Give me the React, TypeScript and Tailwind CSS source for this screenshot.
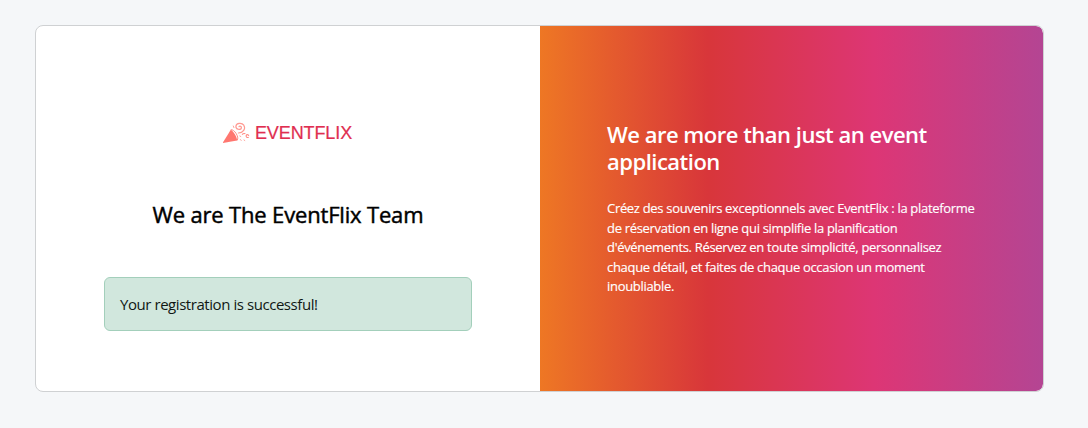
function Logo() {
  return (
    <div className="mr-[2px] flex h-6 items-center gap-[5px]">
      <svg width="28" height="24" viewBox="0 0 28 24" fill="none" aria-hidden="true">
        <path d="M.6 21.9 8.8 8.8C11.4 10.5 14.5 15 15.2 19.4Z" fill="#ff7770" />
        <path d="M8.8 8.8C12 7.8 17.6 16 15.2 19.4" stroke="#ff8a83" strokeWidth="1" />
        <path d="M16.4 12C21.2 11.8 24 7.7 21.8 4.2c-2-2.9-7.5-2.3-7.9 1-.3 3.2 4.8 4.3 5.5 1.8.4-1.5-1.5-2.4-2.4-1.4" stroke="#ff9a92" strokeWidth="1.2" strokeLinecap="round" />
        <path d="M20 13.6c1.2-1.2 2.2-1.4 3.4-.8M26.7 16.2c-1.4.6-3-.1-2.5-1.7.6-1.5 2.8-.9 2.4.5" stroke="#ff8a83" strokeWidth="1.1" />
        <path d="m11.3 5 .6 1.6M17.8 15l1 .5M18.4 18.5l.8 1M22 19l.8.5" stroke="#ffa49c" strokeWidth="1" strokeLinecap="round" />
      </svg>
      <span className="font-['Liberation_Sans',sans-serif] text-[18px] leading-6 tracking-[-0.1px] text-[#e02e50] [-webkit-text-stroke:0.2px_#e02e50]">EVENTFLIX</span>
    </div>
  );
}

export default function App() {
  return (
    <main className="h-[428px] bg-[#f5f7f9] pt-[25px] pl-[35px] font-['Open_Sans','Noto_Sans',sans-serif]">
      <div className="flex h-[367px] w-[1009px] overflow-hidden rounded-lg border border-[#cfd1d3] bg-white">
        <section className="flex w-[504px] flex-col items-center px-[68px] pt-[95px]">
          <Logo />
          <h1 className="mt-[56px] text-[22px] leading-[27px] tracking-[-0.17px] whitespace-nowrap text-black [-webkit-text-stroke:0.45px_black]">We are The EventFlix Team</h1>
          <div role="alert" className="mt-[49px] h-[54px] w-full rounded-md border border-[#a3cfbb] bg-[#d1e7dd] px-[15px] text-[15px] leading-[53px] tracking-[-0.44px] text-[#101814]">
            Your registration is successful!
          </div>
        </section>
        <section className="w-[503px] rounded-r-[7px] bg-[linear-gradient(to_right,#ee7724,#d8363a,#dd3675,#b44593)] pt-[95px] pl-[67px] text-white">
          <h2 className="w-[369px] text-[22px] leading-[27px] font-semibold tracking-[-0.5px]">
            We are more than just an event<br />application
          </h2>
          <p className="mt-[24px] text-[13px] leading-[19.5px] tracking-[-0.31px] whitespace-nowrap [-webkit-text-stroke:0.15px_white]">
            Créez des souvenirs exceptionnels avec EventFlix : la plateforme<br />
            de réservation en ligne qui simplifie la planification<br />
            d'événements. Réservez en toute simplicité, personnalisez<br />
            chaque détail, et faites de chaque occasion un moment<br />
            inoubliable.
          </p>
        </section>
      </div>
    </main>
  );
}
